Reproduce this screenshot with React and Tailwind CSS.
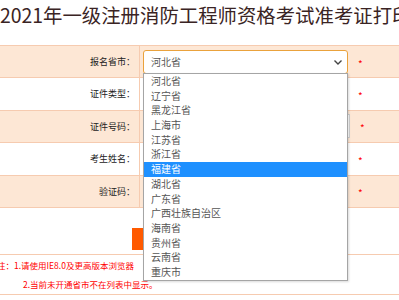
import React from "react";

const provinces = [
  "河北省", "辽宁省", "黑龙江省", "上海市", "江苏省", "浙江省", "福建省",
  "湖北省", "广东省", "广西壮族自治区", "海南省", "贵州省", "云南省", "重庆市",
];

function Star() {
  return <span className="ml-[10px] text-[10px] leading-none text-[#ff0000] translate-y-[2px]">*</span>;
}

function Row({ label, bg, children }) {
  return (
    <div className={`grid grid-cols-[140px_1fr] h-[32.4px] border-b border-[#f6cbb0] ${bg}`}>
      <div className="border-r border-[#f6cbb0] flex items-center justify-end pr-[4px] text-[9px] text-[#222]">
        {label}
      </div>
      <div className="flex items-center pl-[3px]">{children}</div>
    </div>
  );
}

export default function App() {
  return (
    <div className="relative w-[399px] h-[300px] overflow-hidden bg-white font-['Noto_Sans_CJK_SC',sans-serif]">
      <div className="h-[45px] whitespace-nowrap text-[19.4px] leading-[30px] text-[#3a2424]">
        2021年一级注册消防工程师资格考试准考证打印
      </div>
      <div className="border-t border-[#f6cbb0]">
        <Row label="报名省市：" bg="bg-[#fde7d5]">
          <div className="flex h-[24px] w-[205px] items-center justify-between rounded-[3px] border border-[#eaa23c] bg-white pl-[7px] pr-[4px] text-[10px] text-[#555]">
            <span>河北省</span>
            <svg width="10" height="10" viewBox="0 0 10 10" fill="none" stroke="#444" strokeWidth="1.4">
              <path d="M1.5 3.5 L5 7 L8.5 3.5" />
            </svg>
          </div>
          <Star />
        </Row>
        <Row label="证件类型：" bg="bg-white">
          <div className="h-[24px] w-[205px] rounded-[3px] border border-[#ccc] bg-white" />
          <Star />
        </Row>
        <Row label="证件号码：" bg="bg-[#fde7d5]">
          <div className="h-[24px] w-[207px] border border-[#d0d0d0] bg-white" />
          <Star />
        </Row>
        <Row label="考生姓名：" bg="bg-white">
          <div className="h-[24px] w-[205px] border border-[#d0d0d0] bg-white" />
          <Star />
        </Row>
        <Row label="验证码：" bg="bg-[#fde7d5]">
          <div className="h-[24px] w-[205px] border border-[#d0d0d0] bg-white" />
          <Star />
        </Row>
      </div>
      <div className="h-[20px]" />
      <div className="pl-[132px]">
        <div className="h-[22px] w-[90px] bg-[#ff5a00]" />
      </div>
      <div className="mt-[4px] border-t border-[#f6cbb0] pt-[1px] text-[8.5px] leading-[19px] text-[#ff0000]">
        <div className="ml-[-3px] whitespace-nowrap">注：1.请使用IE8.0及更高版本浏览器</div>
        <div className="pl-[23px] whitespace-nowrap">2.当前未开通省市不在列表中显示。</div>
      </div>
      <div className="border-t border-[#f6cbb0]" />

      <div className="absolute left-[143px] top-[73px] w-[205px] border border-[#a5a5a5] bg-white shadow-[1px_1px_2px_rgba(0,0,0,0.15)]">
        {provinces.map((p) => (
          <div
            key={p}
            className={`h-[14.7px] pl-[7px] text-[10px] leading-[14.7px] whitespace-nowrap ${
              p === "福建省" ? "bg-[#1e90ff] text-white" : "text-[#555]"
            }`}
          >
            {p}
          </div>
        ))}
      </div>
    </div>
  );
}
